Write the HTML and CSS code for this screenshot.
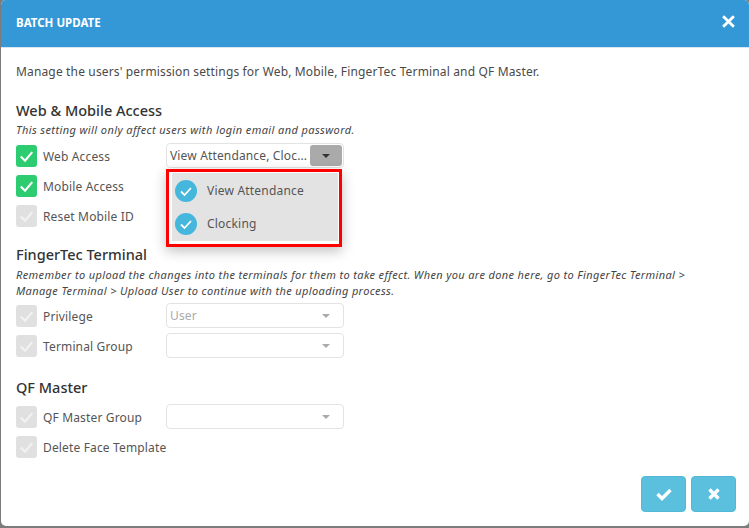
FILE: index.html
```html
<!DOCTYPE html>
<html lang="en">
<head>
<meta charset="utf-8">
<title>Batch Update</title>
<link rel="stylesheet" href="styles.css">
</head>
<body>
<div class="modal">
  <header class="modal-head">
    <span class="modal-title">BATCH UPDATE</span>
    <svg class="close" viewBox="0 0 14 14"><path d="M2 2l10 10M12 2L2 12"/></svg>
  </header>
  <main class="modal-body">
    <p class="intro">Manage the users' permission settings for Web, Mobile, FingerTec Terminal and QF Master.</p>

    <section class="sec sec-web">
      <h2>Web &amp; Mobile Access</h2>
      <p class="note">This setting will only affect users with login email and password.</p>
      <div class="row">
        <label class="lab"><span class="cb on"><svg viewBox="0 0 22 22"><path d="M5 11.5l4.5 4.5L17 7"/></svg></span>Web Access</label>
        <div class="sel open">
          <span class="val">View Attendance, Cloc...</span>
          <span class="arrow-btn"><i class="caret dark"></i></span>
          <div class="menu">
            <div class="menu-in">
              <div class="opt"><span class="tick"><svg viewBox="0 0 22 22"><path d="M6 11.5l3.5 3.5L16 8"/></svg></span>View Attendance</div>
              <div class="opt"><span class="tick"><svg viewBox="0 0 22 22"><path d="M6 11.5l3.5 3.5L16 8"/></svg></span>Clocking</div>
            </div>
          </div>
        </div>
      </div>
      <div class="row">
        <label class="lab"><span class="cb on"><svg viewBox="0 0 22 22"><path d="M5 11.5l4.5 4.5L17 7"/></svg></span>Mobile Access</label>
      </div>
      <div class="row">
        <label class="lab"><span class="cb"><svg viewBox="0 0 22 22"><path d="M5 11.5l4.5 4.5L17 7"/></svg></span>Reset Mobile ID</label>
      </div>
    </section>

    <section class="sec sec-term">
      <h2>FingerTec Terminal</h2>
      <p class="note">Remember to upload the changes into the terminals for them to take effect. When you are done here, go to FingerTec Terminal &gt; Manage Terminal &gt; Upload User to continue with the uploading process.</p>
      <div class="row">
        <label class="lab"><span class="cb"><svg viewBox="0 0 22 22"><path d="M5 11.5l4.5 4.5L17 7"/></svg></span>Privilege</label>
        <div class="sel"><span class="val muted">User</span><i class="caret"></i></div>
      </div>
      <div class="row">
        <label class="lab"><span class="cb"><svg viewBox="0 0 22 22"><path d="M5 11.5l4.5 4.5L17 7"/></svg></span>Terminal Group</label>
        <div class="sel"><span class="val"></span><i class="caret"></i></div>
      </div>
    </section>

    <section class="sec sec-qf">
      <h2>QF Master</h2>
      <div class="row">
        <label class="lab"><span class="cb"><svg viewBox="0 0 22 22"><path d="M5 11.5l4.5 4.5L17 7"/></svg></span>QF Master Group</label>
        <div class="sel"><span class="val"></span><i class="caret"></i></div>
      </div>
      <div class="row">
        <label class="lab"><span class="cb"><svg viewBox="0 0 22 22"><path d="M5 11.5l4.5 4.5L17 7"/></svg></span>Delete Face Template</label>
      </div>
    </section>
  </main>
  <footer class="modal-foot">
    <button class="btn" type="button"><svg class="ic-check" viewBox="0 0 18 14"><path d="M2.5 7l4.5 4.5L15.5 3"/></svg></button>
    <button class="btn" type="button"><svg class="ic-x" viewBox="0 0 14 14"><path d="M2.5 2.5l9 9M11.5 2.5l-9 9"/></svg></button>
  </footer>
</div>
</body>
</html>
```
FILE: styles.css
```css
* { box-sizing: border-box; }
html, body { margin: 0; height: 100%; }
body {
  background: #7c7c7c;
  font-family: "Noto Sans", "Liberation Sans", sans-serif;
  color: #444;
  overflow: hidden;
  padding: 0 0 2px 1px;
}
.modal {
  height: 526px;
  background: #fff;
  border-radius: 5px;
  overflow: hidden;
  display: flex;
  flex-direction: column;
}
.modal-head {
  height: 48px;
  flex: none;
  background: #3598d6;
  border-bottom: 1px solid #d9e6ef;
  display: flex;
  align-items: center;
  justify-content: space-between;
  padding: 0 13px 2px 15px;
}
.modal-title {
  color: #fff;
  font-size: 11.5px;
  font-weight: 700;
}
.close { width: 15px; height: 15px; margin-bottom: 3px; fill: none; stroke: #fff; stroke-width: 2.6; }
.modal-body { flex: 1; padding: 0 15px; position: relative; }
.intro {
  margin: 15px 0 0;
  font-size: 12px;
  line-height: 18px;
  letter-spacing: 0.15px;
  color: #4a4a4a;
}
.sec h2 {
  margin: 0 0 2px;
  font-size: 14.5px;
  line-height: 20px;
  font-weight: 500;
  color: #333;
}
.sec-web { margin-top: 19px; }
.sec-term { margin-top: 13px; }
.sec-term h2 { margin-bottom: 3px; }
.sec-term .note { margin-bottom: 2px; letter-spacing: 0.37px; }
.sec-qf { margin-top: 16px; }
.sec-qf h2 { margin-bottom: 5px; }
.note {
  margin: 0 0 3px;
  font-size: 11px;
  line-height: 16px;
  font-style: italic;
  letter-spacing: 0.4px;
  color: #444;
  max-width: 680px;
}
.row { height: 30px; display: flex; align-items: center; }
.lab {
  width: 150px;
  flex: none;
  display: flex;
  align-items: center;
  font-size: 12px;
  letter-spacing: 0.15px;
  color: #555;
  white-space: nowrap;
}
.cb {
  width: 21px;
  height: 22px;
  border-radius: 3px;
  background: #e0e0e0;
  margin-right: 6px;
  flex: none;
}
.cb svg { display: block; width: 100%; height: 100%; fill: none; stroke: #f2f2f2; stroke-width: 2.2; }
.cb.on { background: #2ecc71; }
.cb.on svg { stroke: #fff; }
.sel {
  width: 178px;
  height: 25px;
  margin-bottom: 1px;
  border: 1px solid #e3e3e3;
  border-radius: 4px;
  background: #fff;
  display: flex;
  align-items: center;
  padding: 0 1px 0 3px;
  position: relative;
}
.val { flex: 1; font-size: 12px; letter-spacing: 0.15px; color: #555; white-space: nowrap; }
.val.muted { color: #aaa; }
.arrow-btn {
  width: 32px;
  height: 21px;
  background: #aaa;
  border-radius: 3px;
  display: flex;
  align-items: center;
  justify-content: center;
  flex: none;
}
.caret {
  width: 0;
  height: 0;
  border-left: 4px solid transparent;
  border-right: 4px solid transparent;
  border-top: 4px solid #aaa;
  margin-right: 12px;
}
.caret.dark { border-top-color: #333; margin-right: 0; }
.menu {
  position: absolute;
  left: -1px;
  top: 25px;
  width: 176px;
  height: 78px;
  border: 3px solid #f00;
  background: #fff;
  padding: 1px 0 3px 3px;
  box-shadow: 0 4px 12px rgba(0, 0, 0, 0.25);
  z-index: 2;
}
.menu-in { width: 166px; height: 68px; background: #e3e3e3; padding-top: 1px; }
.opt {
  height: 33px;
  display: flex;
  align-items: center;
  font-size: 12px;
  letter-spacing: 0.2px;
  color: #555;
  padding-left: 3px;
}
.tick {
  width: 22px;
  height: 22px;
  border-radius: 50%;
  background: #45b6dc;
  margin-right: 10px;
  flex: none;
}
.tick svg { display: block; width: 100%; height: 100%; fill: none; stroke: #fff; stroke-width: 1.8; }
.modal-foot {
  flex: none;
  height: 50px;
  display: flex;
  justify-content: flex-end;
  align-items: flex-start;
  gap: 5px;
  padding-right: 13px;
}
.btn {
  width: 45px;
  height: 36px;
  border: 1px solid #53b8d8;
  border-radius: 4px;
  background: #5bc0de;
  padding: 0;
  display: flex;
  align-items: center;
  justify-content: center;
}
.btn svg { height: 14px; fill: none; stroke: #fff; stroke-width: 3.4; }
.btn .ic-check { width: 18px; }
.btn .ic-x { width: 14px; }
```
